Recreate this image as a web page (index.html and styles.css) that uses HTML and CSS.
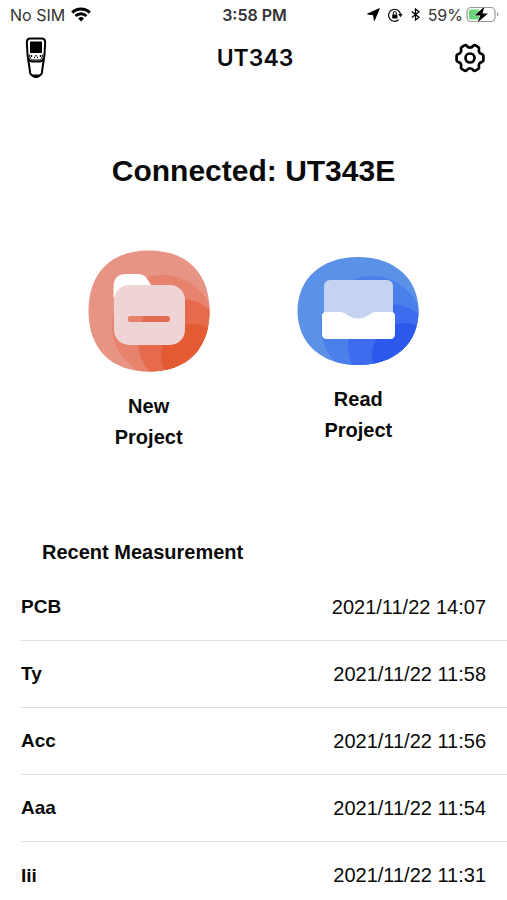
FILE: index.html
```html
<!DOCTYPE html>
<html lang="en">
<head>
    <meta charset="UTF-8">
    <meta name="viewport" content="width=device-width, initial-scale=1.0">
    <title>UT343</title>
    <link rel="stylesheet" href="styles.css">
</head>
<body>

<div class="status-bar">
    <div class="status-left">
        <span>No SIM</span>
        <svg width="20" height="15" viewBox="0 0 20 15" fill="none" stroke="#000" stroke-width="3">
            <path d="M1.2 5.6a12.4 12.4 0 0 1 17.6 0"/>
            <path d="M4.6 9a7.6 7.6 0 0 1 10.8 0"/>
            <path d="M10 14.6 7 11.4a4.3 4.3 0 0 1 6 0z" fill="#000" stroke="none"/>
        </svg>
    </div>
    <div class="status-time">3:58 PM</div>
    <div class="status-right">
        <svg width="13" height="13" viewBox="0 0 13 13">
            <path d="M12.3.7 7.3 12.4 6.6 6.8.6 6z" fill="#000" stroke="#000" stroke-linejoin="round"/>
        </svg>
        <svg width="15" height="14" viewBox="0 0 15 14" fill="none" stroke="#000">
            <path d="M10.6 11.8A6 6 0 1 1 12.5 6" stroke-width="1.2"/>
            <path d="M10.2 6h4.4l-2.2 3.2z" fill="#000" stroke="none"/>
            <rect x="4.2" y="6.4" width="5.2" height="4" rx=".6" fill="#000" stroke="none"/>
            <path d="M5.3 6.6V5a1.5 1.5 0 0 1 3 0v1.6"/>
        </svg>
        <svg width="9" height="13" viewBox="0 0 9 13" fill="none" stroke="#000" stroke-width="1.3">
            <path d="M.8 3.4 8 9.2 4.5 12V1L8 3.8.8 9.6"/>
        </svg>
        <span>59%</span>
        <svg width="33" height="17" viewBox="0 0 33 17">
            <rect x="1" y="1.5" width="28" height="14" rx="4" fill="#fff" stroke="#999" stroke-width="1.2"/>
            <path d="M5 3.5h8v10H5a2 2 0 0 1-2-2v-6a2 2 0 0 1 2-2z" fill="#68d676"/>
            <path d="M31 6.2q3 2.3 0 4.6z" fill="#999"/>
            <path d="M18.6.4 8.600 9.600h5.600L11.600 16.600 22 7.400h-5.600z" fill="#000" stroke="#fff" paint-order="stroke"/>
        </svg>
    </div>
</div>

<header class="nav-bar">
    <button class="icon-button" aria-label="Device">
        <svg width="22" height="42" viewBox="0 0 22 42" fill="none" stroke="#000">
            <path d="M1.8 5Q2 1.500 5.500 1.500h11Q20 1.500 20.200 5L19.400 19Q18.500 24 15 24.500H7Q3.500 24 2.600 19z" stroke-width="2"/>
            <path d="M3 21 5.200 36Q5.600 38 8 39.200h6Q16.400 38 16.800 36L19 21" stroke-width="2"/>
            <rect x="5.500" y="5" width="11" height="10.500" fill="#000"/>
            <path d="M4.200 17.500Q5 23 8 23h6q3 0 3.800-5.500" stroke-width="1"/>
            <path d="M6.500 18v2M15.500 18v2M9 20.500h1M12 20.500h1M11 18v1.500" stroke-width="1.300"/>
            <path d="M6 37.500 9.500 41h3l3.500-3.500z" fill="#000" stroke="none"/>
        </svg>
    </button>
    <h1 class="nav-title">UT343</h1>
    <button class="icon-button" aria-label="Settings">
        <svg width="30" height="30" viewBox="0 0 30 30" fill="none" stroke="#000" stroke-width="2.700" stroke-linejoin="round">
            <path d="M11.500 2.600Q13 4.600 15 4.600T18.500 2.600Q19.500 1.800 20.500 2.400L23.300 4.100Q24.400 4.800 24 6C23.200 8.600 24.800 10.800 27.200 11.200Q28.400 11.500 28.400 12.700V17.300Q28.400 18.500 27.200 18.800C24.800 19.200 23.200 21.400 24 24Q24.400 25.200 23.300 25.900L20.500 27.600Q19.500 28.200 18.500 27.400 17 25.400 15 25.400T11.500 27.400Q10.500 28.200 9.500 27.600L6.700 25.900Q5.600 25.200 6 24C6.800 21.400 5.200 19.200 2.800 18.800Q1.600 18.500 1.600 17.300V12.700Q1.600 11.500 2.800 11.200C5.200 10.800 6.800 8.600 6 6Q5.600 4.800 6.700 4.100L9.500 2.400Q10.500 1.800 11.500 2.600z"/>
            <circle cx="15" cy="15" r="4.500"/>
        </svg>
    </button>
</header>

<main>
    <h2 class="connection">Connected: UT343E</h2>

    <div class="actions">
        <button class="action">
            <svg width="122" height="122" viewBox="0 0 122 122">
                <clipPath id="redShape">
                    <path d="M61 .5C99 .5 121.500 23 121.500 61S99 121.500 61 121.500.5 99 .5 61 23 .5 61 .5z"/>
                </clipPath>
                <g clip-path="url(#redShape)">
                    <rect width="122" height="122" fill="#e79484"/>
                    <circle cx="75" cy="76" r="51" fill="#e7826d"/>
                    <circle cx="93" cy="92" r="43" fill="#e66b4d"/>
                    <circle cx="105" cy="106" r="32" fill="#e35b32"/>
                </g>
                <path d="M25.500 48V37q0-13 13-13h11q6 0 9 4l6 9-10 14z" fill="#fff"/>
                <rect x="26" y="35" width="71" height="60" rx="15" fill="#eed4d4"/>
                <path d="M43 69h36" stroke="#e26b50" stroke-width="6" stroke-linecap="round"/>
                <path d="M43 69h9" stroke="#e7826d" stroke-width="6" stroke-linecap="round"/>
            </svg>
            <span>New<br>Project</span>
        </button>
        <button class="action">
            <svg width="122" height="108" viewBox="0 0 122 108">
                <clipPath id="blueShape">
                    <path d="M61 0C98 0 121.500 22 121.500 54S98 108 61 108 .5 86 .5 54 24 0 61 0z"/>
                </clipPath>
                <g clip-path="url(#blueShape)">
                    <rect width="122" height="108" fill="#5b91e7"/>
                    <circle cx="75" cy="70" r="51" fill="#4b80ea"/>
                    <circle cx="94" cy="90" r="43" fill="#3d6cef"/>
                    <circle cx="107" cy="98" r="32" fill="#2d58ec"/>
                </g>
                <rect x="27" y="23" width="69" height="54" rx="6" fill="#c5d2f1"/>
                <path d="M29 55h15q3 0 6 3 11 7 22 0 3-3 6-3h16q4 0 4 4v18q0 5-5 5H30q-5 0-5-5V59q0-4 4-4z" fill="#fff"/>
            </svg>
            <span>Read<br>Project</span>
        </button>
    </div>

    <h3 class="list-title">Recent Measurement</h3>
    <ul class="measurements">
        <li><span class="name">PCB</span><time datetime="2021-11-22T14:07">2021/11/22 14:07</time></li>
        <li><span class="name">Ty</span><time datetime="2021-11-22T11:58">2021/11/22 11:58</time></li>
        <li><span class="name">Acc</span><time datetime="2021-11-22T11:56">2021/11/22 11:56</time></li>
        <li><span class="name">Aaa</span><time datetime="2021-11-22T11:54">2021/11/22 11:54</time></li>
        <li><span class="name">Iii</span><time datetime="2021-11-22T11:31">2021/11/22 11:31</time></li>
    </ul>
</main>

</body>
</html>
```
FILE: styles.css
```css
* {
    box-sizing: border-box;
}

body {
    margin: 0;
    background-color: #fff;
    color: #0a0a0a;
    font-family: "Liberation Sans", Arial, sans-serif;
}

svg {
    display: block;
}

h1, h2, h3, ul {
    margin: 0;
    padding: 0;
}

button {
    padding: 0;
    border: none;
    background: none;
    color: inherit;
    font-family: inherit;
    cursor: pointer;
}

.status-bar {
    display: grid;
    grid-template-columns: 1fr auto 1fr;
    align-items: center;
    height: 29px;
    padding: 0 8px 0 10px;
    font-family: Inter, sans-serif;
    font-size: 16px;
    color: #333;
}

.status-left,
.status-right {
    display: flex;
    align-items: center;
    gap: 8px;
}

.status-left {
    gap: 6px;
}

.status-right {
    justify-content: flex-end;
}

.status-right span {
    margin-right: -5px;
}

.status-time {
    font-weight: 600;
}

.nav-bar {
    display: grid;
    grid-template-columns: 1fr auto 1fr;
    align-items: center;
    height: 57px;
    padding: 0 22px 0 25px;
}

.icon-button:first-child {
    justify-self: start;
}

.icon-button:last-child {
    justify-self: end;
}

.nav-title {
    font-family: Inter, sans-serif;
    font-size: 23px;
    font-weight: 600;
}

.connection {
    padding-top: 67px;
    font-size: 30px;
    line-height: 36px;
    text-align: center;
}

.actions {
    display: flex;
    align-items: center;
    justify-content: space-evenly;
    padding-top: 61px;
}

.action {
    display: flex;
    flex-direction: column;
    align-items: center;
    gap: 19px;
    font-size: 20px;
    font-weight: bold;
    line-height: 31px;
}

.list-title {
    padding: 87px 42px 0;
    font-size: 20px;
    line-height: 24px;
}

.measurements {
    margin-top: 10px;
    padding-left: 21px;
    list-style: none;
}

.measurements li {
    display: flex;
    align-items: center;
    justify-content: space-between;
    height: 67px;
    padding-right: 21px;
    border-bottom: 1px solid #e0e0e0;
    font-size: 20px;
}

.measurements li:last-child {
    border-bottom: none;
}

.measurements .name {
    font-size: 19px;
    font-weight: bold;
}
```
